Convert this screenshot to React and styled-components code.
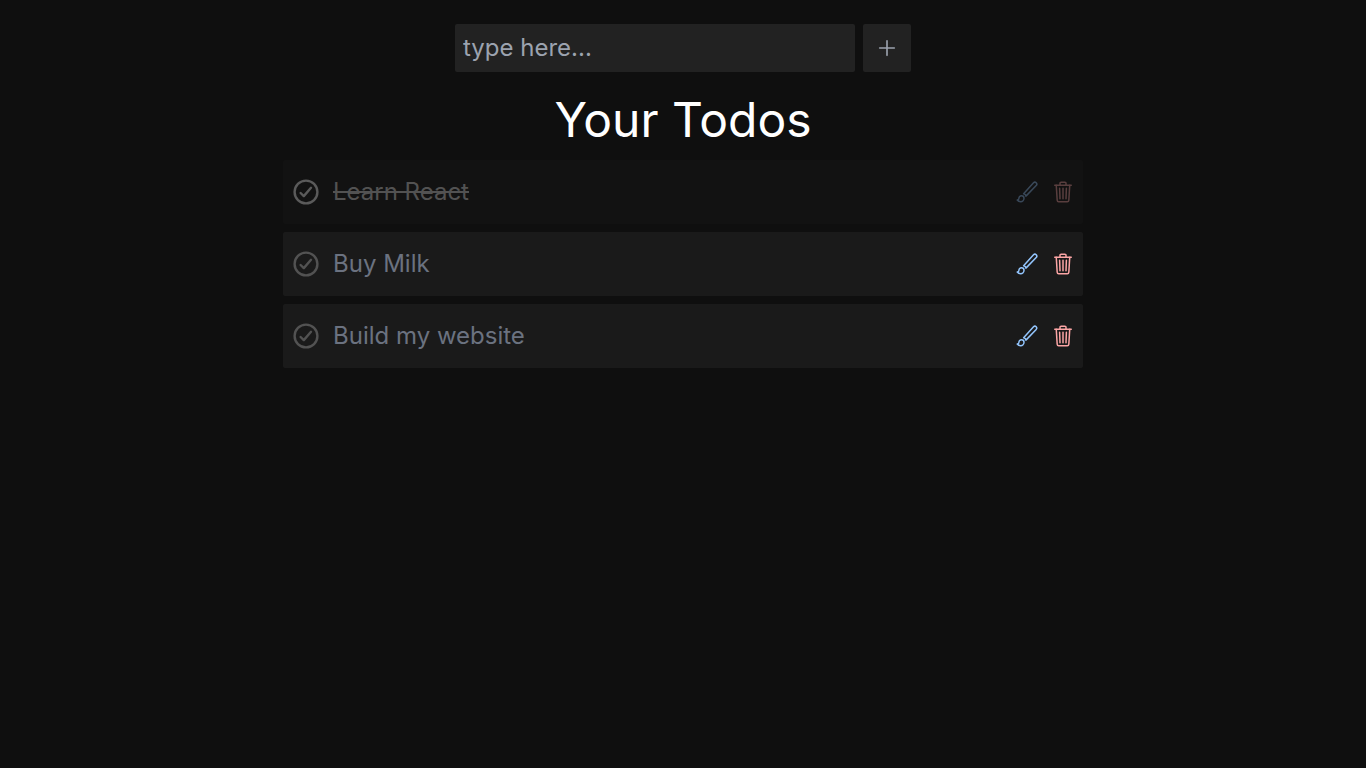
import React, { useState } from "react";
import styled, { createGlobalStyle } from "styled-components";
import { IoAddOutline, IoBrushOutline, IoTrashOutline } from "react-icons/io5";

const GlobalStyle = createGlobalStyle`
  *, *::before, *::after { box-sizing: border-box; }
  body {
    margin: 0;
    background: #0f0f0f;
    color: #ffffff;
    font-family: Inter, sans-serif;
    font-size: 24px;
    line-height: 32px;
  }
  button, input { font: inherit; }
`;

const Page = styled.main`
  display: flex;
  flex-direction: column;
  align-items: center;
  padding: 24px 16px;
`;

const AddForm = styled.form`
  display: flex;
  gap: 8px;
  width: 100%;
  max-width: 456px;
`;

const TextInput = styled.input`
  flex: 1;
  min-width: 0;
  height: 48px;
  padding: 6px 8px 8px;
  border: 0;
  border-radius: 2px;
  background: #222222;
  color: #d1d5db;
  &::placeholder { color: #9ca3af; opacity: 1; }
`;

const AddButton = styled.button`
  display: flex;
  align-items: center;
  justify-content: center;
  width: 48px;
  height: 48px;
  padding: 0;
  border: 0;
  border-radius: 2px;
  background: #222222;
  color: #9ca3af;
  cursor: pointer;
`;

const Title = styled.h1`
  margin: 24px 0 16px;
  font-size: 48px;
  line-height: 48px;
  font-weight: 400;
`;

const List = styled.ul`
  display: flex;
  flex-direction: column;
  gap: 8px;
  width: 100%;
  max-width: 800px;
  margin: 0;
  padding: 0;
  list-style: none;
`;

const Item = styled.li`
  display: flex;
  align-items: center;
  min-height: 64px;
  padding: 0 8px;
  border-radius: 2px;
  background: ${({ $done }) => ($done ? "#121212" : "#1a1a1a")};
`;

const Label = styled.span`
  flex: 1;
  padding-left: 12px;
  color: ${({ $done }) => ($done ? "#525252" : "#6b7280")};
  text-decoration: ${({ $done }) => ($done ? "line-through" : "none")};
`;

const IconButton = styled.button`
  display: flex;
  align-items: center;
  justify-content: center;
  padding: 0;
  border: 0;
  background: none;
  cursor: pointer;
`;

const CheckButton = styled(IconButton)`
  width: 30px;
  height: 30px;
  color: ${({ $done }) => ($done ? "#5a5a5a" : "#525252")};
`;

const Actions = styled.div`
  display: flex;
  gap: 12px;
  opacity: ${({ $done }) => ($done ? 0.3 : 1)};
`;

const EditButton = styled(IconButton)`
  color: #93c5fd;
`;

const DeleteButton = styled(IconButton)`
  color: #fca5a5;
`;

function CheckCircleIcon() {
  return (
    <svg
      width="30"
      height="30"
      viewBox="0 0 30 30"
      fill="none"
      stroke="currentColor"
      strokeWidth="2.4"
      strokeLinecap="round"
      strokeLinejoin="round"
      aria-hidden="true"
    >
      <circle cx="15" cy="15" r="11.4" />
      <path d="M9.6 16L12.8 19.1L20 10.8" />
    </svg>
  );
}

const initialTodos = [
  { id: 1, text: "Learn React", done: true },
  { id: 2, text: "Buy Milk", done: false },
  { id: 3, text: "Build my website", done: false },
];

export default function App() {
  const [todos, setTodos] = useState(initialTodos);
  const [draft, setDraft] = useState("");

  const addTodo = (event) => {
    event.preventDefault();
    const text = draft.trim();
    if (!text) return;
    setTodos([...todos, { id: Date.now(), text, done: false }]);
    setDraft("");
  };

  const toggle = (id) =>
    setTodos(todos.map((t) => (t.id === id ? { ...t, done: !t.done } : t)));

  const edit = (todo) => {
    setDraft(todo.text);
    setTodos(todos.filter((t) => t.id !== todo.id));
  };

  const remove = (id) => setTodos(todos.filter((t) => t.id !== id));

  return (
    <>
      <GlobalStyle />
      <Page>
        <AddForm onSubmit={addTodo}>
          <TextInput
            aria-label="New todo"
            placeholder="type here..."
            value={draft}
            onChange={(event) => setDraft(event.target.value)}
          />
          <AddButton type="submit" aria-label="Add todo">
            <IoAddOutline size={26} />
          </AddButton>
        </AddForm>
        <Title>Your Todos</Title>
        <List>
          {todos.map((todo) => (
            <Item key={todo.id} $done={todo.done}>
              <CheckButton
                type="button"
                aria-label={`Toggle ${todo.text}`}
                aria-pressed={todo.done}
                $done={todo.done}
                onClick={() => toggle(todo.id)}
              >
                <CheckCircleIcon />
              </CheckButton>
              <Label $done={todo.done}>{todo.text}</Label>
              <Actions $done={todo.done}>
                <EditButton type="button" aria-label={`Edit ${todo.text}`} onClick={() => edit(todo)}>
                  <IoBrushOutline size={24} />
                </EditButton>
                <DeleteButton type="button" aria-label={`Delete ${todo.text}`} onClick={() => remove(todo.id)}>
                  <IoTrashOutline size={24} />
                </DeleteButton>
              </Actions>
            </Item>
          ))}
        </List>
      </Page>
    </>
  );
}
